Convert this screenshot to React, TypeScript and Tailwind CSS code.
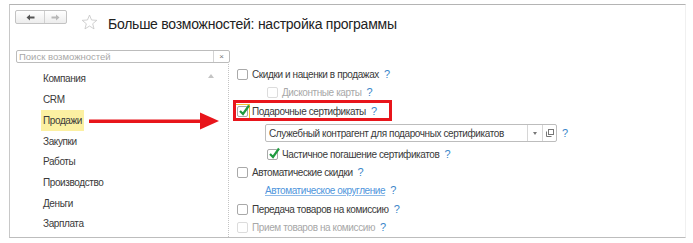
const sections = ['Компания', 'CRM', 'Продажи', 'Закупки', 'Работы', 'Производство', 'Деньги', 'Зарплата'];

function Help() {
    return <span className="ml-[5px] text-[#3b86c9] text-[11px] tracking-normal">?</span>;
}

function Box({ checked = false, disabled = false }: { checked?: boolean; disabled?: boolean }) {
    return (
        <span
            className={`relative inline-block w-[11px] h-[11px] shrink-0 rounded-[2px] border bg-white ${
                disabled ? 'border-[#dcdcdc]' : 'border-[#a9a9a9]'
            }`}
        >
            {checked && (
                <svg className="absolute left-[0px] top-[-3px]" width="13" height="13" viewBox="0 0 13 13">
                    <path d="M2 7 L5 10 L11 1.5" fill="none" stroke="#1f9a3f" strokeWidth="2.2" />
                </svg>
            )}
        </span>
    );
}

export default function App() {
    return (
        <div className="w-[693px] h-[243px] bg-white relative overflow-hidden text-[#3a3a3a]" style={{ fontFamily: '"Liberation Sans", Arial, sans-serif' }}>
            <div className="ml-[9px] mt-[4px] w-[677px] h-[234px] border-t border-l border-b border-r border-t-[#b4b4b4] border-l-[#c8c8c8] border-b-[#bdbdbd] border-r-[#f0f0f0] flex flex-col">
                {/* header */}
                <div className="flex items-start pt-[5px] h-[28px]">
                    <div className="ml-[5px] flex h-[14px] w-[52px] rounded-[2px] border border-[#c3c3c3] bg-gradient-to-b from-white to-[#ededed]">
                        <div className="w-[29px] flex items-center justify-center border-r border-[#d0d0d0]">
                            <svg width="9" height="7" viewBox="0 0 9 7">
                                <path d="M0.5 3.5 L4 0.5 L4 2.6 L8.5 2.6 L8.5 4.4 L4 4.4 L4 6.5 Z" fill="#555" />
                            </svg>
                        </div>
                        <div className="flex-1 flex items-center justify-center">
                            <svg width="9" height="7" viewBox="0 0 9 7">
                                <path d="M8.5 3.5 L5 0.5 L5 2.6 L0.5 2.6 L0.5 4.4 L5 4.4 L5 6.5 Z" fill="#b8b8b8" />
                            </svg>
                        </div>
                    </div>
                    <svg className="ml-[14px] mt-[4px]" width="17" height="16" viewBox="0 0 24 23">
                        <path d="M12 1.5 L14.9 8.6 L22.5 9.1 L16.6 14 L18.5 21.4 L12 17.3 L5.5 21.4 L7.4 14 L1.5 9.1 L9.1 8.6 Z" fill="none" stroke="#c6c6c6" strokeWidth="1.2" strokeLinejoin="round" />
                    </svg>
                    <span className="ml-[10px] mt-[5px] text-[14px] tracking-[-0.25px] leading-[18px] text-[#222]">Больше возможностей: настройка программы</span>
                </div>

                {/* search */}
                <div className="mt-[17px] ml-[6px] flex h-[13px] w-[214px] rounded-[2px] border border-[#bcbcbc] bg-white">
                    <span className="flex-1 pl-[2px] text-[9.5px] leading-[11px] text-[#a8a8a8]">Поиск возможностей</span>
                    <span className="w-[16px] flex items-center justify-center border-l border-[#d4d4d4] text-[8px] leading-none text-[#777]">×</span>
                </div>

                {/* body */}
                <div className="flex flex-1 mt-[1px] text-[10px] tracking-[-0.4px]">
                    <div className="relative w-[218px] pt-[4.6px]">
                        <span className="absolute left-[198px] top-[10px] w-0 h-0 border-l-[3px] border-r-[3px] border-b-[4px] border-l-transparent border-r-transparent border-b-[#c4c4c4]" />
                        {sections.map((s) => (
                            <div key={s} className="h-[20.7px] pl-[31px] flex items-stretch">
                                <span className={`px-[2px] flex items-center ${s === 'Продажи' ? 'bg-[#fcf0a2]' : ''}`}>{s}</span>
                            </div>
                        ))}
                    </div>

                    <div className="flex-1 border-l border-dotted border-[#c4c4c4] pl-[8px] pt-[1px]">
                        <div className="h-[18px] flex items-center">
                            <Box />
                            <span className="ml-[4px]">Скидки и наценки в продажах</span>
                            <Help />
                        </div>
                        <div className="h-[18px] flex items-center pl-[30px]">
                            <Box disabled />
                            <span className="ml-[4px] text-[#a8a8a8]">Дисконтные карты</span>
                            <Help />
                        </div>
                        <div className="h-[20px] flex items-center">
                            <span className="-ml-[2px] mr-[-2px] p-[1px] border border-[#f2c230] flex">
                                <Box checked />
                            </span>
                            <span className="ml-[4px]">Подарочные сертификаты</span>
                            <Help />
                        </div>
                        <div className="h-[24px] flex items-center pl-[28px]">
                            <div className="flex h-[18px] w-[292px] rounded-[2px] border border-[#bdbdbd] bg-white">
                                <span className="flex-1 pl-[3px] flex items-center">Служебный контрагент для подарочных сертификатов</span>
                                <span className="w-[15px] flex items-center justify-center border-l border-[#d6d6d6]">
                                    <span className="w-0 h-0 border-l-[2px] border-r-[2px] border-t-[3px] border-l-transparent border-r-transparent border-t-[#777]" />
                                </span>
                                <span className="w-[14px] flex items-center justify-center border-l border-[#d6d6d6]">
                                    <svg width="8" height="8" viewBox="0 0 8 8">
                                        <rect x="2.5" y="0.5" width="5" height="5" fill="none" stroke="#777" strokeWidth="1" />
                                        <path d="M0.5 2.5 L0.5 7.5 L5.5 7.5" fill="none" stroke="#777" strokeWidth="1" />
                                    </svg>
                                </span>
                            </div>
                            <Help />
                        </div>
                        <div className="h-[18px] flex items-center pl-[30px]">
                            <Box checked />
                            <span className="ml-[4px]">Частичное погашение сертификатов</span>
                            <Help />
                        </div>
                        <div className="h-[18px] flex items-center">
                            <Box />
                            <span className="ml-[4px]">Автоматические скидки</span>
                            <Help />
                        </div>
                        <div className="h-[19px] flex items-center pl-[28px]">
                            <span className="text-[#4f95dc] underline decoration-[#8fbbe8]">Автоматическое округление</span>
                            <Help />
                        </div>
                        <div className="h-[18px] flex items-center">
                            <Box />
                            <span className="ml-[4px]">Передача товаров на комиссию</span>
                            <Help />
                        </div>
                        <div className="h-[19px] flex items-center">
                            <Box disabled />
                            <span className="ml-[4px] text-[#a8a8a8]">Прием товаров на комиссию</span>
                            <Help />
                        </div>
                    </div>
                </div>
            </div>

            {/* annotations */}
            <div className="absolute left-[233px] top-[100px] w-[159px] h-[21px] border-[3px] border-[#e8151b]" />
            <svg className="absolute left-[88px] top-[111px]" width="132" height="20" viewBox="0 0 132 20">
                <rect x="1" y="8.5" width="115" height="3.5" fill="#e8151b" />
                <path d="M112 1.5 L131 10 L112 18.5 Z" fill="#e8151b" />
            </svg>
        </div>
    );
}
